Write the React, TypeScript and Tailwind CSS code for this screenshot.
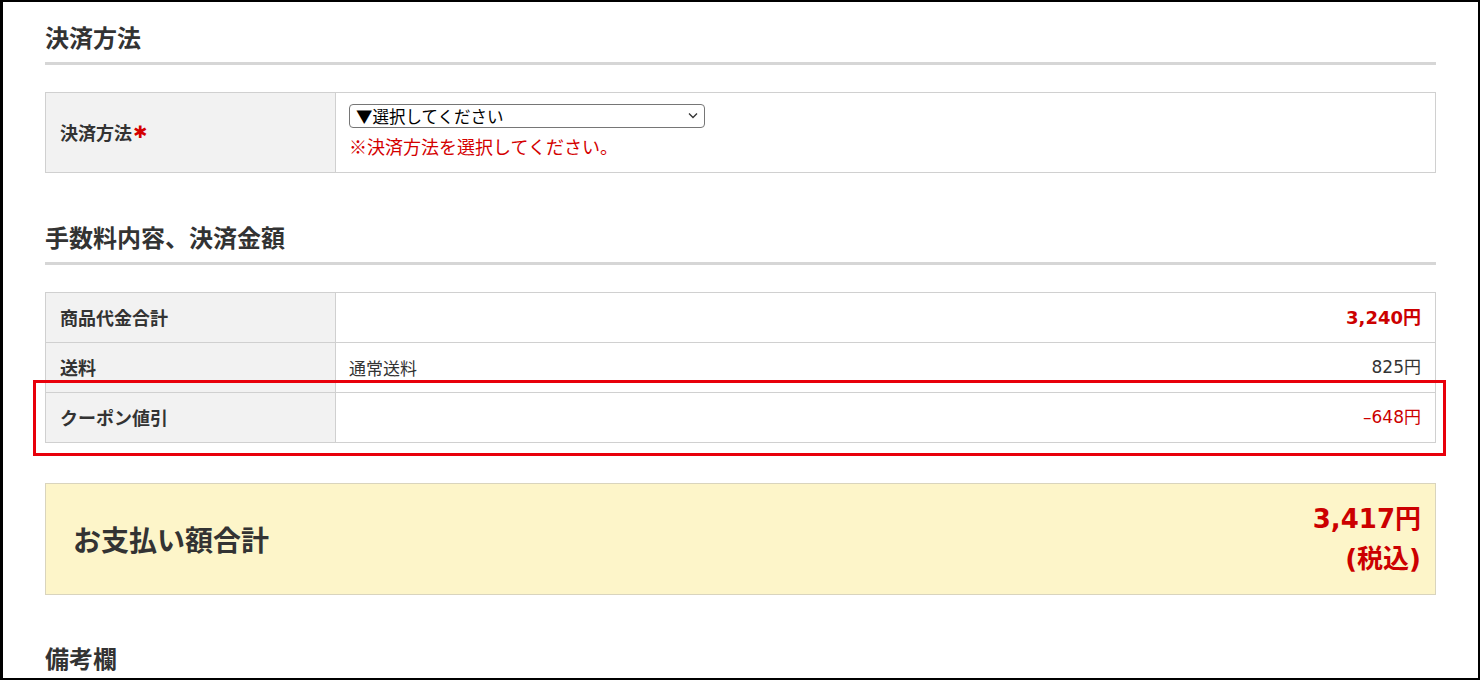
// Checkout summary: payment method + fee breakdown + total
import React from "react";

const font = "font-['Noto_Sans_CJK_JP','Noto_Sans',sans-serif]";
const numFont = "font-['DejaVu_Sans','Noto_Sans_CJK_JP',sans-serif]";

function SectionTitle({ children, className = "" }: { children: React.ReactNode; className?: string }) {
  return (
    <h2
      className={`border-b-[3px] border-[#d6d6d6] pb-[7px] text-[24px] font-bold leading-[36px] text-[#333] ${className}`}
    >
      {children}
    </h2>
  );
}

function Row({
  label,
  middle,
  amount,
  amountClass,
  highlight,
  first,
}: {
  label: string;
  middle?: string;
  amount: string;
  amountClass: string;
  highlight?: boolean;
  first?: boolean;
}) {
  return (
    <div className={`relative flex ${first ? "h-[49px]" : "h-[50px] border-t border-[#d0d0d0]"}`}>
      <div className="flex w-[290px] shrink-0 items-center border-r border-[#d0d0d0] bg-[#f2f2f2] pl-[14px] text-[18px] font-bold text-[#333]">
        {label}
      </div>
      <div className="flex flex-1 items-center justify-between pl-[13px] pr-[14px] text-[17px] text-[#333]">
        <span>{middle}</span>
        <span className={`${numFont} ${amountClass}`}>{amount}</span>
      </div>
      {highlight && (
        <div className="pointer-events-none absolute -bottom-[14px] -left-[13px] -right-[11px] -top-[13px] border-[3px] border-[#e8000b]" />
      )}
    </div>
  );
}

export default function App() {
  return (
    <div className={`${font} h-[680px] overflow-hidden border-2 border-l-[3px] border-black bg-white`}>
      <div className="px-[42px] pt-[17px]">
        <SectionTitle>決済方法</SectionTitle>

        <div className="mt-[27px] flex h-[81px] border border-[#d0d0d0]">
          <div className="flex w-[290px] shrink-0 items-center border-r border-[#d0d0d0] bg-[#f2f2f2] pl-[14px] text-[18px] font-bold text-[#333]">
            決済方法
            <span className="ml-[1px] font-['DejaVu_Sans',sans-serif] text-[17px] leading-none text-[#d40000]">✱</span>
          </div>
          <div className="flex flex-col pl-[13px] pt-[11px]">
            <div className="relative w-[356px]">
              <select className="h-[24px] w-full appearance-none rounded-[4px] border border-[#767676] bg-white pl-[6px] text-[16.5px] leading-[22px] text-black">
                <option>▼選択してください</option>
              </select>
              <svg
                className="pointer-events-none absolute right-[7px] top-[8px]"
                width="10"
                height="7"
                viewBox="0 0 10 7"
                fill="none"
                stroke="#333"
                strokeWidth="1.3"
              >
                <path d="M1 1.5l4 4 4-4" />
              </svg>
            </div>
            <p className="mt-[6px] text-[18px] leading-[24px] text-[#d40000]">※決済方法を選択してください。</p>
          </div>
        </div>

        <SectionTitle className="mt-[46px]">手数料内容、決済金額</SectionTitle>

        <div className="mt-[27px] border border-[#d0d0d0]">
          <Row first label="商品代金合計" amount="3,240円" amountClass="text-[18px] font-bold text-[#cc0000]" />
          <Row label="送料" middle="通常送料" amount="825円" amountClass="text-[17px] text-[#333]" />
          <Row label="クーポン値引" amount="–648円" amountClass="text-[17px] text-[#cc0000]" highlight />
        </div>

        <div className="mt-[40px] flex h-[112px] items-center justify-between border border-[#d9d4bd] bg-[#fdf5c9] pl-[27px] pr-[14px]">
          <span className="text-[28px] font-bold text-[#333]">お支払い額合計</span>
          <div className={`${numFont} text-right text-[26px] font-bold leading-[40px] text-[#cc0000]`}>
            <div>3,417円</div>
            <div>(税込)</div>
          </div>
        </div>

        <h2 className="mt-[45px] text-[24px] font-bold leading-[36px] text-[#333]">備考欄</h2>
      </div>
    </div>
  );
}
